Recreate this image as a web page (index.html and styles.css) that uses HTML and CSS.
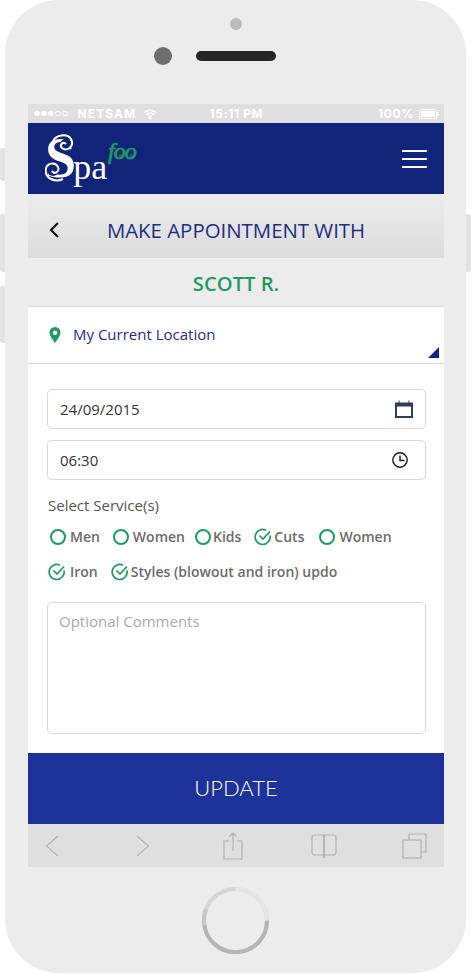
FILE: index.html
```html
<!DOCTYPE html>
<html lang="en">
<head>
  <meta charset="UTF-8">
  <meta name="viewport" content="width=device-width, initial-scale=1.0">
  <title>Make Appointment - Spafoo</title>
  <link rel="stylesheet" href="styles.css">
</head>
<body>
  <div class="phone">
    <!-- Side buttons of the handset -->
    <span class="side-btn side-mute"></span>
    <span class="side-btn side-up"></span>
    <span class="side-btn side-down"></span>
    <span class="side-btn side-power"></span>

    <div class="bezel-top">
      <span class="sensor"></span>
      <div class="bezel-row">
        <span class="camera"></span>
        <span class="speaker"></span>
      </div>
    </div>

    <div class="screen">
      <!-- Status bar -->
      <div class="status">
        <div class="status-left">
          <span class="dots"><i class="on"></i><i class="on"></i><i class="on"></i><i></i><i></i></span>
          <span class="carrier">NETSAM</span>
          <svg class="wifi" width="14" height="10" viewBox="0 0 14 10" fill="none" stroke="#fff" stroke-width="1.4">
            <path d="M1 3.6C4.5.4 9.5.4 13 3.6"/>
            <path d="M3.1 5.7c2.3-2 5.5-2 7.8 0"/>
            <path d="M5.2 7.7c1.1-.9 2.5-.9 3.6 0"/>
            <circle cx="7" cy="9.2" r=".5" fill="#fff"/>
          </svg>
        </div>
        <span class="status-time">15:11 PM</span>
        <div class="status-right">
          <span>100%</span>
          <svg width="20" height="10" viewBox="0 0 20 10">
            <rect x=".5" y=".5" width="17" height="9" fill="none" stroke="#fff"/>
            <rect x="2" y="2" width="14" height="6" fill="#fff"/>
            <rect x="18" y="3" width="1.5" height="4" fill="#fff"/>
          </svg>
        </div>
      </div>

      <!-- App header -->
      <header class="nav">
        <div class="logo">
          <span class="logo-s">S</span><span class="logo-pa">pa</span>
          <span class="logo-foo">foo</span>
          <!-- curls on the S and inside the two o's -->
          <svg class="logo-swirl" width="93" height="50" viewBox="0 0 93 50" fill="none" stroke="#fff" stroke-width="2">
            <circle cx="21" cy="11" r="5.5" fill="#12247a" stroke="none"/>
            <circle cx="8" cy="37" r="6" fill="#12247a" stroke="none"/>
            <path d="M8 8C11 2 22 0 26 6c4 7-4 13-9 9-3-3 1-7 4-4"/>
            <path d="M18 46C10 50 0 45 .8 37 1 30 10 28 13 34c2 5-4 8-6 4"/>
            <path d="M74 22c2-1 3 1 2 2s-2 0-2-1" stroke="#1f9a63" stroke-width="1"/>
            <path d="M85 22c2-1 3 1 2 2s-2 0-2-1" stroke="#1f9a63" stroke-width="1"/>
          </svg>
        </div>
        <div class="burger"><span></span><span></span><span></span></div>
      </header>

      <div class="title-bar">
        <svg class="back" width="12" height="18" viewBox="0 0 12 18" fill="none" stroke="#111" stroke-width="2">
          <path d="M10 2 3 9l7 7"/>
        </svg>
        <h1>MAKE APPOINTMENT WITH</h1>
      </div>

      <div class="name-bar">SCOTT R.</div>

      <div class="location">
        <svg width="12" height="16" viewBox="0 0 12 16">
          <path fill="#1f9a63" fill-rule="evenodd" d="M6 0a5.5 5.5 0 0 1 5.5 5.5C11.5 9 8 13 6 16 4 13 .5 9 .5 5.5A5.5 5.5 0 0 1 6 0zm0 3.5a2.2 2.2 0 1 0 0 4.4 2.2 2.2 0 0 0 0-4.4z"/>
        </svg>
        <span class="location-text">My Current Location</span>
        <span class="corner"></span>
      </div>

      <form class="form">
        <div class="field">
          <span>24/09/2015</span>
          <svg width="18" height="18" viewBox="0 0 18 18">
            <path fill="#2c3e5c" fill-rule="evenodd" d="M0 2.5h3.5V.5h1v2h9v-2h1v2H18V18H0zM2 6.5V16h14V6.5z"/>
          </svg>
        </div>
        <div class="field">
          <span>06:30</span>
          <svg class="clock" width="16" height="16" viewBox="0 0 16 16" fill="none" stroke="#1a1a1a" stroke-width="1.4">
            <circle cx="8" cy="8" r="7.2"/>
            <path d="M8 3.5V8.5H12.5"/>
          </svg>
        </div>

        <p class="form-label">Select Service(s)</p>

        <div class="services">
          <span class="service"><i class="radio"></i>Men</span>
          <span class="service"><i class="radio"></i>Women</span>
          <span class="service tight near"><i class="radio"></i>Kids</span>
          <span class="service tight"><svg width="18" height="18" viewBox="0 0 18 18" fill="none" stroke="#1f9a63" stroke-width="1.7"><path d="M16 7.5A7.5 7.5 0 1 1 12 2.3"/><path d="M5.5 7.5 9 11l7-7.5"/></svg>Cuts</span>
          <span class="service far"><i class="radio"></i>Women</span>
        </div>
        <div class="services">
          <span class="service"><svg width="18" height="18" viewBox="0 0 18 18" fill="none" stroke="#1f9a63" stroke-width="1.7"><path d="M16 7.5A7.5 7.5 0 1 1 12 2.3"/><path d="M5.5 7.5 9 11l7-7.5"/></svg>Iron</span>
          <span class="service tight"><svg width="18" height="18" viewBox="0 0 18 18" fill="none" stroke="#1f9a63" stroke-width="1.7"><path d="M16 7.5A7.5 7.5 0 1 1 12 2.3"/><path d="M5.5 7.5 9 11l7-7.5"/></svg>Styles (blowout and iron) updo</span>
        </div>

        <div class="comments">Optional Comments</div>
      </form>

      <button class="update" type="button">UPDATE</button>

      <!-- Safari toolbar -->
      <div class="toolbar">
        <span class="tool"><svg width="14" height="22" viewBox="0 0 14 22" fill="none" stroke="#b3b3b3" stroke-width="1.2"><path d="M13 1 1.5 11 13 21"/></svg></span>
        <span class="tool"><svg width="14" height="22" viewBox="0 0 14 22" fill="none" stroke="#b3b3b3" stroke-width="1.2"><path d="M1 1l11.5 10L1 21"/></svg></span>
        <span class="tool"><svg width="20" height="28" viewBox="0 0 20 28" fill="none" stroke="#b3b3b3" stroke-width="1.2"><path d="M6 9H1v18h18V9h-5"/><path d="M10 19V1M6.5 4.5 10 1l3.5 3.5"/></svg></span>
        <span class="tool"><svg width="26" height="24" viewBox="0 0 26 24" fill="none" stroke="#b3b3b3" stroke-width="1.2"><rect x="1" y="1" width="24" height="20" rx="2.5"/><path d="M13 1v23" stroke="#999"/></svg></span>
        <span class="tool"><svg width="25" height="26" viewBox="0 0 25 26" fill="none" stroke="#b3b3b3" stroke-width="1.2"><rect x="1" y="7" width="18" height="18"/><path d="M7 7V1h17v18h-5"/></svg></span>
      </div>
    </div>

    <div class="bezel-bottom">
      <svg class="home" width="67" height="67" viewBox="0 0 67 67" fill="none" stroke-width="4">
        <circle cx="33.5" cy="33.5" r="31.5" stroke="#d6d6d4"/>
        <path d="M33.5 2A31.5 31.5 0 0 1 65 33.5" stroke="#e5e5e5"/>
        <path d="M65 33.5A31.5 31.5 0 0 1 2.3 38" stroke="#b5b5b5"/>
        <path d="M2.3 38A31.5 31.5 0 0 1 4 22" stroke="#c6c6c6"/>
      </svg>
    </div>
  </div>
</body>
</html>
```

FILE: styles.css
```css
/* General page */
html, body {
  margin: 0;
  padding: 0;
}

body {
  width: 471px;
  height: 974px;
  overflow: hidden;
  background-color: #fff;
  font-family: 'Open Sans', 'Liberation Sans', sans-serif;
  color: #333;
}

/* Handset */
.phone {
  position: relative;
  width: 461px;
  height: 973px;
  margin: 0 5px;
  background-color: #ececec;
  border-radius: 54px;
}

.side-btn {
  position: absolute;
  width: 5px;
  background-color: #e2e2e0;
}

.side-mute { left: -5px; top: 148px; height: 33px; border-radius: 3px 0 0 3px; }
.side-up { left: -5px; top: 214px; height: 58px; border-radius: 3px 0 0 3px; }
.side-down { left: -5px; top: 286px; height: 57px; border-radius: 3px 0 0 3px; }
.side-power { right: -5px; top: 214px; height: 58px; border-radius: 0 3px 3px 0; }

.bezel-top {
  height: 104px;
  display: flex;
  flex-direction: column;
  align-items: center;
  box-sizing: border-box;
  padding-top: 18px;
}

.sensor {
  width: 12px;
  height: 12px;
  border-radius: 50%;
  background-color: #bcbcbc;
}

.bezel-row {
  display: flex;
  align-items: center;
  gap: 24px;
  margin-top: 17px;
  margin-left: -41px;
}

.camera {
  width: 18px;
  height: 18px;
  border-radius: 50%;
  background-color: #6e6e6e;
}

.speaker {
  width: 80px;
  height: 10px;
  border-radius: 5px;
  background-color: #262626;
}

/* Screen */
.screen {
  width: 416px;
  margin-left: 23px;
  background-color: #fff;
}

.status {
  height: 19px;
  display: grid;
  grid-template-columns: 1fr auto 1fr;
  align-items: center;
  padding: 0 5px 0 6px;
  background-color: #dfdfdf;
  color: #fff;
  font-family: Inter, 'Liberation Sans', sans-serif;
  font-size: 12px;
  font-weight: 700;
  letter-spacing: .6px;
}

.status-left {
  display: flex;
  align-items: center;
  gap: 10px;
}

.status-right {
  display: flex;
  align-items: center;
  justify-content: flex-end;
  gap: 5px;
}

.carrier {
  letter-spacing: 1.1px;
}

.dots {
  display: flex;
  gap: 1.5px;
}

.dots i {
  width: 5.5px;
  height: 5.5px;
  box-sizing: border-box;
  border: 1px solid #fff;
  border-radius: 50%;
}

.dots i.on {
  background-color: #fff;
}

.wifi {
  margin-left: -3px;
}

.nav {
  height: 71px;
  display: flex;
  align-items: center;
  justify-content: space-between;
  padding: 0 17px;
  background-color: #12247a;
}

/* Logo: the curls are drawn over real text */
.logo {
  position: relative;
  width: 93px;
  height: 50px;
  margin-top: -1px;
  font-family: 'Liberation Serif', serif;
  color: #fff;
  line-height: 50px;
  white-space: nowrap;
}

.logo-s {
  font-size: 56px;
  font-weight: 700;
  vertical-align: 2px;
}

.logo-pa {
  font-size: 36px;
  margin-left: -3px;
}

.logo-foo {
  position: absolute;
  left: 63px;
  top: 3px;
  font-size: 24px;
  line-height: 30px;
  font-style: italic;
  letter-spacing: -1px;
  color: #1f9a63;
  -webkit-text-stroke: .7px #1f9a63;
}

.logo-swirl {
  position: absolute;
  left: 0;
  top: 0;
}

.burger {
  width: 25px;
  display: flex;
  flex-direction: column;
  gap: 6px;
}

.burger span {
  height: 2px;
  background-color: #fff;
}

/* Title */
.title-bar {
  height: 64px;
  box-sizing: border-box;
  padding: 8px 20px 0;
  display: flex;
  align-items: center;
  background: linear-gradient(#ececec, #dcdcdc);
}

.title-bar h1 {
  flex: 1;
  margin: 0 0 0 -12px;
  text-align: center;
  font-size: 20.4px;
  font-weight: 400;
  color: #1e2e85;
}

.name-bar {
  height: 48px;
  line-height: 51px;
  text-align: center;
  font-size: 20.2px;
  font-weight: 600;
  color: #1f9a63;
  background-color: #ececec;
  border-bottom: 1px solid #d9d9d9;
}

.location {
  position: relative;
  height: 56px;
  display: flex;
  align-items: center;
  gap: 13px;
  padding-left: 21px;
  font-size: 15px;
  color: #1e2e85;
  border-bottom: 1px solid #d9d9d9;
}

.location-text {
  margin: -2px 0 0 -1px;
}

.corner {
  position: absolute;
  right: 5px;
  bottom: 5px;
  width: 0;
  height: 0;
  border-left: 11px solid transparent;
  border-bottom: 11px solid #12247a;
}

/* Form */
.form {
  padding: 25px 18px 19px 19px;
}

.field {
  height: 38px;
  display: flex;
  align-items: center;
  justify-content: space-between;
  margin-bottom: 11px;
  padding: 0 12px;
  border: 1px solid #d9d9d9;
  border-radius: 5px;
  font-size: 15px;
  color: #333;
}

.clock {
  margin-right: 5px;
}

.form-label {
  margin: 15px 0 0 1px;
  font-size: 15px;
  line-height: 20px;
  color: #555;
}

.services {
  display: flex;
  align-items: center;
  gap: 13px;
  height: 35px;
  margin-left: 3px;
  font-size: 14px;
  font-weight: 600;
  color: #6b6b6b;
}

.form-label + .services {
  margin-top: 4px;
}

.services + .services {
  margin-left: 1px;
}

.service {
  display: flex;
  align-items: center;
  gap: 4px;
}

.service.tight {
  gap: 2px;
}

.service.near {
  margin-left: -3px;
}

.service.far {
  margin-left: 2px;
}

.radio {
  width: 16px;
  height: 16px;
  box-sizing: border-box;
  border: 2px solid #1f9a63;
  border-radius: 50%;
}

.comments {
  height: 112px;
  margin-top: 13px;
  padding: 8px 11px 10px;
  border: 1px solid #d9d9d9;
  border-radius: 5px;
  font-size: 15px;
  color: #a9a9a9;
}

.update {
  display: block;
  width: 100%;
  height: 71px;
  border: none;
  padding: 0 0 3px;
  background-color: #1e329b;
  color: #fff;
  font-family: Lato, 'Liberation Sans', sans-serif;
  font-size: 22px;
  font-weight: 300;
}

.toolbar {
  height: 43px;
  display: flex;
  align-items: center;
  justify-content: space-between;
  padding: 0 17px 0 11px;
  background-color: #dfdfdf;
}

.tool {
  width: 26px;
  display: flex;
  justify-content: center;
}

/* Home button */
.bezel-bottom {
  display: flex;
  justify-content: center;
  padding-top: 20px;
}
```
